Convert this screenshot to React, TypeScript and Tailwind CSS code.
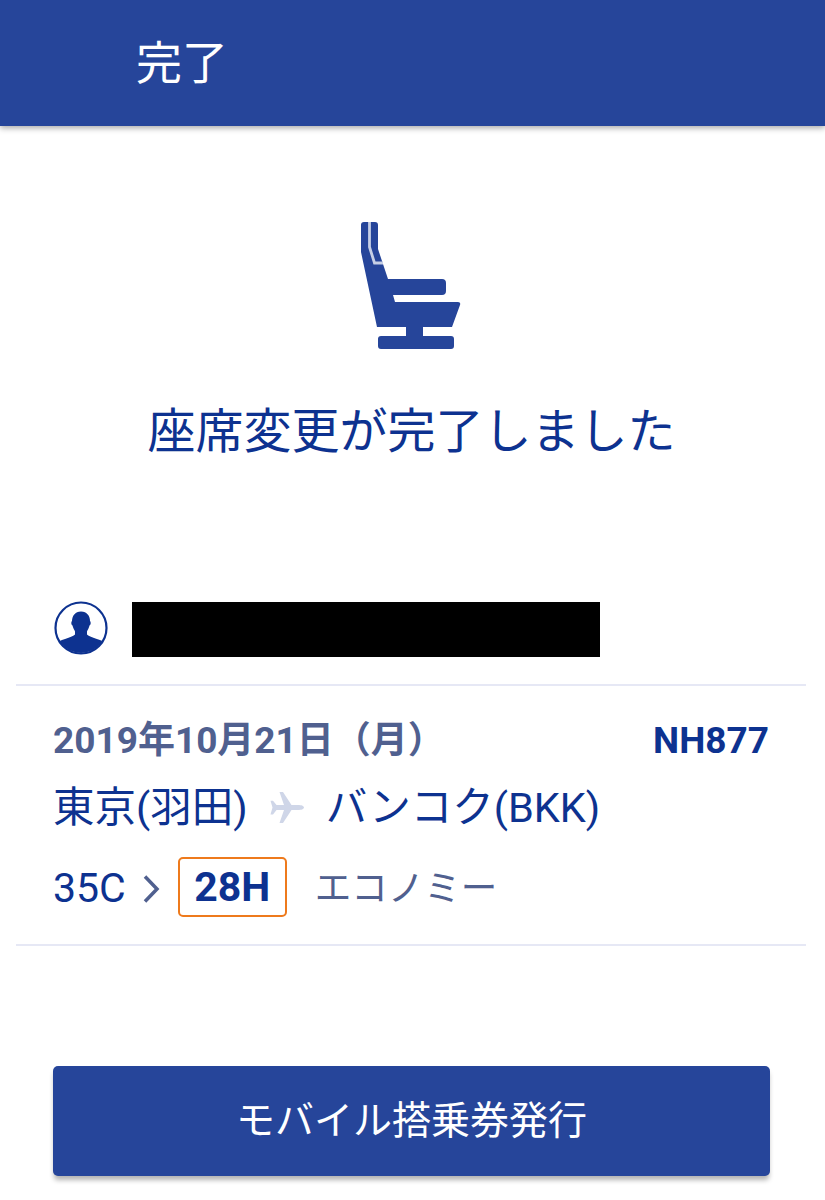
function SeatIcon() {
  return (
    <svg width="110" height="140" viewBox="355 215 110 140" className="block -translate-x-[3px]">
      <path
        fill="#26459a"
        d="M364 222H375Q378 222 378 225V249L388 279H442Q446 279 446 283V291Q446 295 442 295H393L395 302H458Q461 302 460 305L452 327H423V336H451Q454 336 454 339V346Q454 349 451 349H381Q378 349 378 346V339Q378 336 381 336H406V327H377L361 252V225Q361 222 364 222Z"
      />
      <path fill="none" stroke="#c6cfe6" strokeWidth="2.800" d="M369.500 222V247L374.500 263H383" />
    </svg>
  )
}

function PersonIcon() {
  return (
    <svg width="54" height="54" viewBox="0 0 54 54" className="-mt-px block">
      <circle cx="27" cy="27" r="25.500" fill="none" stroke="#0d3290" strokeWidth="2.200" />
      <path
        fill="#0d3290"
        d="M27 10.500C33 10.500 36 15 36 20C37 21 37 23.500 35.500 24.500C35 27 33.500 29 33 30.500V33.500C36 36.500 42 37 48.300 40A25 25 0 0 1 5.700 40C12 37 18 36.500 21 33.500V30.500C20.500 29 19 27 18.500 24.500C17 23.500 17 21 18 20C18 15 21 10.500 27 10.500Z"
      />
    </svg>
  )
}

function PlaneIcon() {
  return (
    <svg width="36" height="36" viewBox="0 0 36 36" className="ml-[21px] block">
      <path
        fill="#cfd6e8"
        d="M35 17.500C35 15.800 32 15 29 15H22.500L14 2H10.500L15 15H7.500L4 10.800H1.500L3.500 17.500L1.500 24.500H4L7.500 20H15L10.500 33H14L22.500 20H29C32 20 35 19.200 35 17.500Z"
      />
    </svg>
  )
}

export default function App() {
  return (
    <main
      className="h-[1200px] w-[825px] overflow-hidden bg-white"
      style={{ fontFamily: 'Roboto, "Noto Sans CJK JP", sans-serif' }}
    >
      <header className="flex h-[126px] items-center bg-[#26459a] pl-[136px] text-[46px] text-white shadow-[0_2px_6px_rgba(0,0,0,0.35)]">
        完了
      </header>

      <section className="flex flex-col items-center pt-[89px]">
        <SeatIcon />
        <h1 className="mt-[41px] pr-[2px] text-[48px] leading-[72px] font-normal text-[#0d3290]">
          座席変更が完了しました
        </h1>
      </section>

      <div className="mt-[134px] flex items-start pl-[54px]">
        <PersonIcon />
        <div className="ml-[24px] h-[55px] w-[468px] bg-black" />
      </div>

      <div className="mt-[27px] ml-4 h-[262px] w-[790px] border-y-2 border-[#e6e8f5] px-[37px] pt-[30px]">
        <div className="flex items-center justify-between text-[37px] leading-[50px] font-bold">
          <span className="text-[#50608f]">2019年10月21日（月）</span>
          <span className="text-[#0d3290]">NH877</span>
        </div>
        <div className="mt-[15px] flex items-center text-[41.500px] leading-[54px] text-[#0d3290]">
          <span>東京(羽田)</span>
          <PlaneIcon />
          <span className="ml-[21px]">バンコク(BKK)</span>
        </div>
        <div className="mt-[20px] flex items-center text-[41px] text-[#0d3290]">
          <span className="pt-[3px]">35C</span>
          <svg width="20" height="30" viewBox="0 0 20 30" className="mt-[3px] ml-[15px]">
            <path d="M4 2.500L16 15L4 27.500" fill="none" stroke="#50608f" strokeWidth="3.500" />
          </svg>
          <span className="ml-[17px] flex h-[60px] w-[109px] items-center justify-center rounded-[5px] border-2 border-[#ee7a1c] font-bold">
            28H
          </span>
          <span className="ml-[28px] pt-[4px] text-[36.500px] text-[#50608f]">エコノミー</span>
        </div>
      </div>

      <div className="mt-[120px] px-[53px]">
        <button className="flex h-[110px] w-[717px] items-center justify-center rounded-[5px] bg-[#26459a] text-[39px] text-white shadow-[0_5px_5px_-1px_rgba(0,0,0,0.3)]">
          モバイル搭乗券発行
        </button>
      </div>
    </main>
  )
}
